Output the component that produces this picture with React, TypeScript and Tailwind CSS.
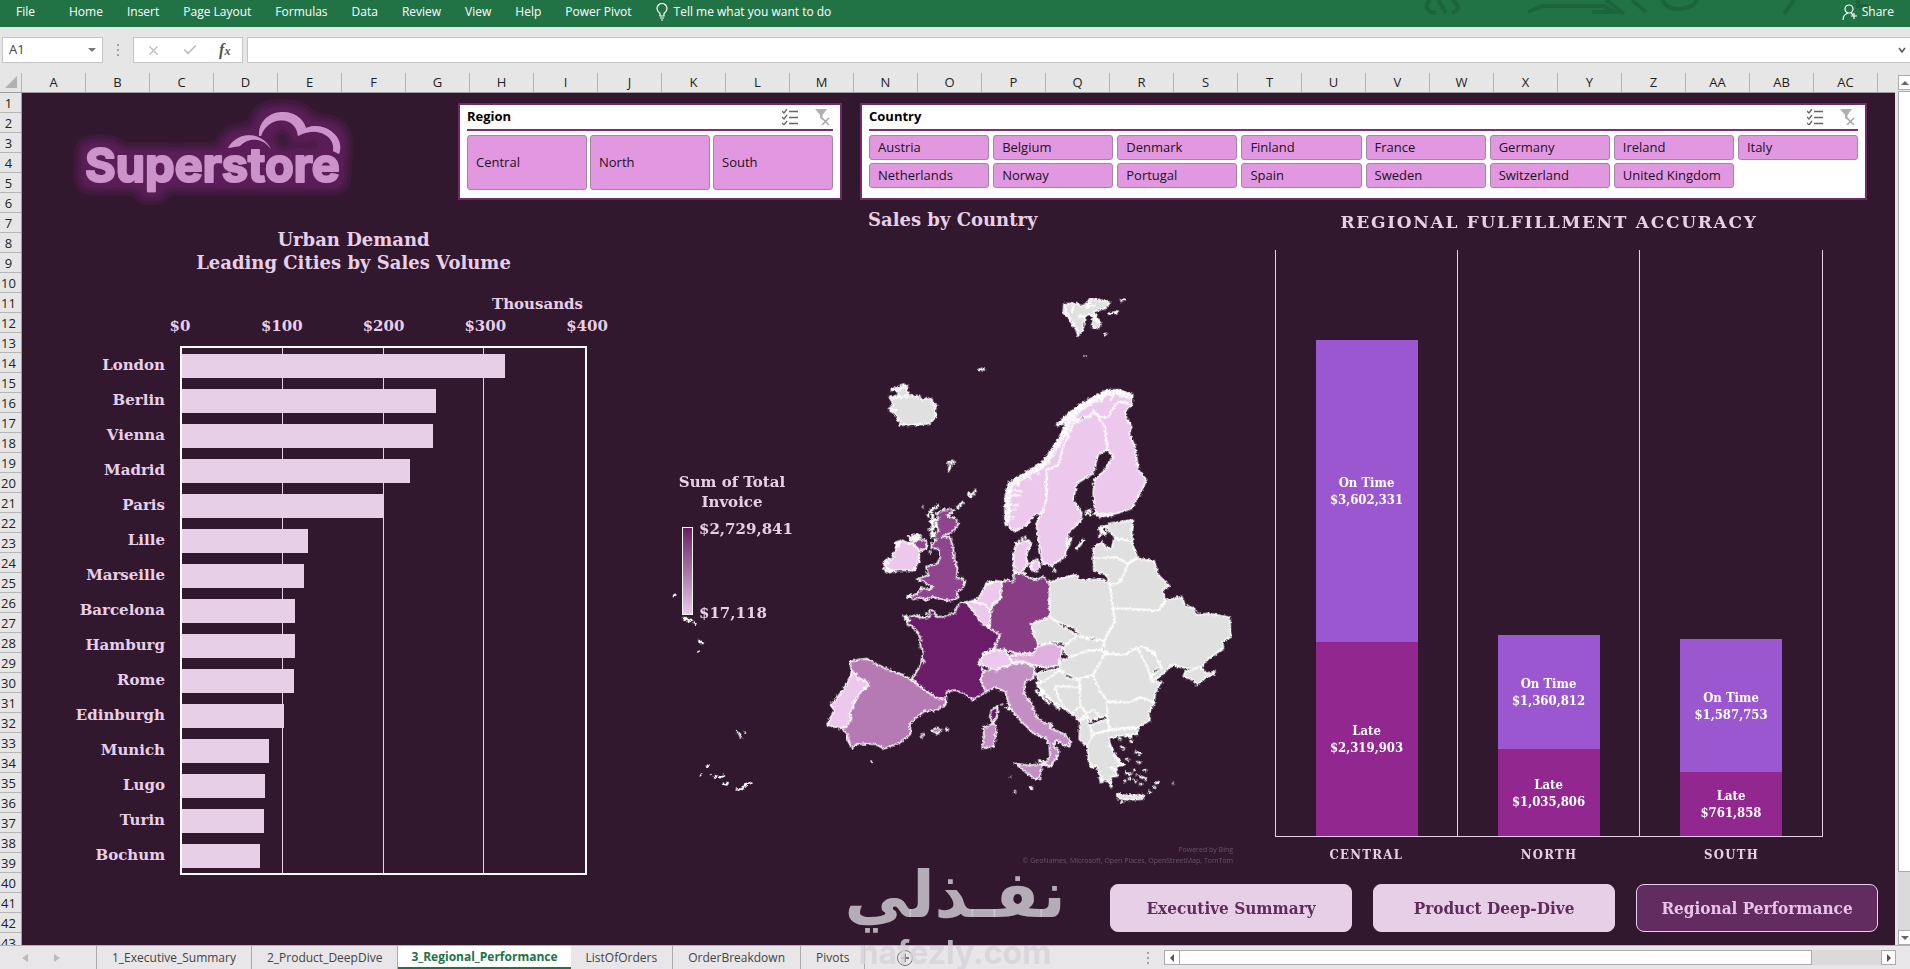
import React from "react";
import { Check, X } from "lucide-react";

const MENU = ["Home", "Insert", "Page Layout", "Formulas", "Data", "Review", "View", "Help", "Power Pivot"];

const COLUMNS = [..."ABCDEFGHIJKLMNOPQRSTUVWXYZ", "AA", "AB", "AC"];

const REGIONS = ["Central", "North", "South"];

const COUNTRIES = [
  "Austria", "Belgium", "Denmark", "Finland", "France", "Germany", "Ireland", "Italy",
  "Netherlands", "Norway", "Portugal", "Spain", "Sweden", "Switzerland", "United Kingdom",
];

// sales in thousands
const CITIES = [
  { name: "London", value: 321 },
  { name: "Berlin", value: 252 },
  { name: "Vienna", value: 249 },
  { name: "Madrid", value: 226 },
  { name: "Paris", value: 200 },
  { name: "Lille", value: 125 },
  { name: "Marseille", value: 121 },
  { name: "Barcelona", value: 112 },
  { name: "Hamburg", value: 112 },
  { name: "Rome", value: 111 },
  { name: "Edinburgh", value: 101 },
  { name: "Munich", value: 86 },
  { name: "Lugo", value: 82 },
  { name: "Turin", value: 81 },
  { name: "Bochum", value: 77 },
];
const CITY_MAX = 400;

const FULFILLMENT = [
  { region: "Central", onTime: 3602331, late: 2319903 },
  { region: "North", onTime: 1360812, late: 1035806 },
  { region: "South", onTime: 1587753, late: 761858 },
];
const FULFILLMENT_MAX = 7000000;

const SHEETS = ["1_Executive_Summary", "2_Product_DeepDive", "3_Regional_Performance", "ListOfOrders", "OrderBreakdown", "Pivots"];

const SERIF = "font-['DejaVu_Serif',serif] font-bold";
const SERIF_NARROW = "font-['DejaVu_Serif_Condensed','DejaVu_Serif',serif] font-bold";

const money = (n: number) => "$" + n.toLocaleString("en-US");

function Ribbon() {
  return (
    <header className="relative flex h-[27px] shrink-0 items-start overflow-hidden bg-[#217346] text-xs leading-6 text-white">
      <svg className="absolute top-0 right-0 h-[27px] w-[500px]" viewBox="0 0 500 27" fill="none" stroke="#1c653c" strokeWidth="4">
        <path d="M20 0c-6 6-4 12 6 13M28 0l8 13M42 0c8 5 8 10 0 13M118 12l14-6h62l10 6h-22M196 0l18 14M222 0l14 12M252 0c6 12 26 12 36 0M384 0l-10 14M448 0v6h10" />
      </svg>
      <nav className="relative flex gap-6 pl-4">
        <button type="button" className="mr-2.5">File</button>
        {MENU.map((item) => (
          <button key={item} type="button">{item}</button>
        ))}
        <button type="button" className="flex items-center gap-1.5">
          <svg className="h-[18px] w-3" viewBox="0 0 12 18" fill="none" stroke="white" strokeWidth="1.2">
            <path d="M4 13v-2.500C2 9 1 7.500 1 5.500a5 5 0 0 1 10 0c0 2-1 3.500-3 5V13zM4 15h4M5 17h2" />
          </svg>
          Tell me what you want to do
        </button>
      </nav>
      <button type="button" className="relative ml-auto flex items-center gap-1 pr-4">
        <svg className="h-4 w-4" viewBox="0 0 16 16" fill="none" stroke="white" strokeWidth="1.200">
          <circle cx="7" cy="5" r="4" />
          <path d="M1 16c0-4 2-6 5-7M9 9l2 2M12 9v6M9 12h6" />
        </svg>
        Share
      </button>
    </header>
  );
}

function FormulaBar() {
  return (
    <div className="flex h-[46px] shrink-0 items-start gap-1 bg-[#e6e6e6] pt-[10px]">
      <div className="ml-0.5 flex h-[26px] w-[101px] items-center border border-[#c6c6c6] bg-white pr-1.5">
        <input aria-label="Name box" defaultValue="A1" className="w-full bg-transparent pl-1.5 text-[13px] text-[#444] outline-none" />
        <svg className="h-1 w-2 shrink-0" viewBox="0 0 8 4" fill="#777"><path d="M0 0h8l-4 4z" /></svg>
      </div>
      <div className="flex h-[26px] w-[22px] items-center justify-center">
        <svg className="h-3 w-0.5" viewBox="0 0 2 12" fill="#a0a0a0"><path d="M0 0h2v2H0zM0 5h2v2H0zM0 10h2v2H0z" /></svg>
      </div>
      <div className="flex h-[26px] w-[110px] items-center justify-around border border-[#c6c6c6] bg-white px-px">
        <button type="button" aria-label="Cancel"><X size={15} color="#bdbdbd" strokeWidth={2} /></button>
        <button type="button" aria-label="Enter"><Check size={16} color="#bdbdbd" strokeWidth={2.5} /></button>
        <button type="button" className="font-['Liberation_Serif',serif] text-base leading-4 font-bold italic text-[#555]">
          f<span className="text-xs">x</span>
        </button>
      </div>
      <div className="flex h-[26px] flex-1 items-center border border-r-0 border-[#c6c6c6] bg-white pr-1">
        <input aria-label="Formula" className="w-full bg-transparent px-2 text-[13px] outline-none" />
        <svg className="h-1.5 w-2 shrink-0" viewBox="0 0 8 6" fill="none" stroke="#555" strokeWidth="1.500"><path d="M1 1l3 4 3-4" /></svg>
      </div>
    </div>
  );
}

function Logo() {
  return (
    <svg className="h-[130px] w-[320px]" viewBox="0 0 320 130" role="img" aria-label="Superstore">
      <defs>
        <filter id="glow" x="-20%" y="-30%" width="140%" height="160%">
          <feMorphology in="SourceAlpha" operator="dilate" radius="8" result="fat" />
          <feGaussianBlur in="fat" stdDeviation="5" result="soft" />
          <feFlood floodColor="#5c1e5a" />
          <feComposite in2="soft" operator="in" result="halo" />
          <feMerge>
            <feMergeNode in="halo" />
            <feMergeNode in="SourceGraphic" />
          </feMerge>
        </filter>
      </defs>
      <g filter="url(#glow)" fill="#cc92ca" stroke="#cc92ca" strokeLinejoin="round">
        <text x="25" y="87" fontSize="47" strokeWidth="2" className="font-['Inter',sans-serif] font-bold">Superstore</text>
        <g stroke="none">
          <path d="M168 53C178 36 201 36 211 54C202 42 188 42 180 51z" />
          <path d="M199 41C198 12 239 9 246 33C264 25 286 42 279 59L273 56C276 42 258 30 238 41C236 20 208 20 201 41z" />
        </g>
      </g>
    </svg>
  );
}

function MultiSelectIcon() {
  return (
    <svg className="h-4 w-4" viewBox="0 0 16 16" fill="none" stroke="#666" strokeWidth="1.300">
      <path d="M0 2l2 2 3-4M0 8l2 2 3-4M0 14l2 2 3-4M7 2.500h9M7 8.500h9M7 14.500h9" />
    </svg>
  );
}

function ClearFilterIcon() {
  return (
    <svg className="h-4 w-4" viewBox="0 0 16 16" fill="none" stroke="#a6a6a6" strokeWidth="1.500">
      <path d="M1 0h12L8.500 6v5L6 9V6z" fill="#b0b0b0" stroke="none" />
      <path d="M8 9l7 7M15 9l-7 7" />
    </svg>
  );
}

type SlicerProps = { title: string; items: string[]; gridClass: string; itemClass: string };

function Slicer({ title, items, gridClass, itemClass }: SlicerProps) {
  return (
    <section className="h-[97px] min-w-0 border-2 border-[#6f2a6c] bg-white px-[7px]">
      <div className="flex h-[26px] items-center gap-4 border-b-2 border-[#7c2f78] pr-[3px]">
        <h2 className="flex-1 text-[13px] font-bold text-black">{title}</h2>
        <button type="button" aria-label="Multi-select"><MultiSelectIcon /></button>
        <button type="button" aria-label="Clear filter"><ClearFilterIcon /></button>
      </div>
      <div className={`mt-1 grid ${gridClass}`}>
        {items.map((item) => (
          <button
            key={item}
            type="button"
            className={`rounded-[3px] border border-[#a187a1] bg-[#e298e1] pl-2 text-left text-[13px] whitespace-nowrap text-[#1c101c] ${itemClass}`}
          >
            {item}
          </button>
        ))}
      </div>
    </section>
  );
}

function CityChart() {
  return (
    <section className="pt-7 pr-[53px] text-[#e8cfe8]">
      <h2 className={`pl-[98px] text-center text-[18px] leading-[23px] ${SERIF}`}>
        Urban Demand
        <br />
        Leading Cities by Sales Volume
      </h2>
      <p className={`mt-[19px] pr-1 text-right text-[15px] leading-[22px] ${SERIF}`}>Thousands</p>
      <div className={`ml-[158px] flex justify-between text-[15px] leading-[22px] ${SERIF}`}>
        {[0, 100, 200, 300, 400].map((tick) => (
          <span key={tick} className="flex w-0 justify-center">${tick}</span>
        ))}
      </div>
      <div className="mt-[9px] flex">
        <ul className={`w-[158px] pt-0.5 pr-[15px] text-right text-[15px] leading-[35px] ${SERIF}`}>
          {CITIES.map((city) => (
            <li key={city.name}>{city.name}</li>
          ))}
        </ul>
        <div className="grid flex-1 border-2 border-white">
          <div className="col-start-1 row-start-1 grid grid-cols-4 divide-x divide-[#e8cfe8]">
            <i /><i /><i /><i />
          </div>
          <div className="col-start-1 row-start-1">
            {CITIES.map((city) => (
              <div key={city.name} className="flex h-[35px] items-center">
                <div className="h-6 bg-[#e8cfe8]" style={{ width: `${(city.value / CITY_MAX) * 100}%` }} />
              </div>
            ))}
          </div>
        </div>
      </div>
    </section>
  );
}

const GREY = "#e0e0e0";
const PALE = "#ecc9ec";

// Each group has its own origin, see the translate on its <g>.
const NORTH = [
  { fill: GREY, d: "M88 350L102 356 112 350 122 356 134 345 140 354 152 344 166 352 178 346 184 362 200 354 216 358 218 372 230 376 224 388 228 410 214 426 200 432 160 434 122 435 108 405 85 388 100 375z" },
  { fill: GREY, d: "M95 325L112 322 130 312 142 318 140 332 146 345 120 350 112 336z" },
  { fill: GREY, d: "M612 72L650 70 664 78 680 72 690 55 720 60 750 68 735 85 700 95 722 130 715 145 695 138 700 120 690 100 675 110 670 145 655 168 645 140 632 125 628 112 610 100z" },
  { fill: PALE, d: "M435 655L445 610 500 575 545 550 575 510 600 470 622 430 590 435 625 400 665 370 705 350 740 330 780 330 818 345 815 374 795 366 775 365 758 385 745 412 722 412 700 392 690 410 668 410 640 430 625 470 610 500 595 555 560 570 558 610 560 660 545 700 522 705 500 735 465 755 435 730z" },
  { fill: PALE, d: "M700 392L735 440 740 490 742 510 715 522 700 580 650 610 640 660 665 700 662 722 625 760 615 830 575 858 548 850 538 800 528 730 545 700 560 655 560 570 595 555 610 500 640 430 690 410z" },
  { fill: PALE, d: "M700 392L722 412 745 412 758 385 775 365 815 374 796 395 800 415 815 440 808 460 825 500 835 570 860 600 840 640 815 685 770 700 720 712 705 690 700 640 702 600 730 575 760 530 742 510 740 480 735 440z" },
];

const WEST = [
  { fill: "#8f458d", d: "M372 28L405 28 382 48 402 54 417 70 395 98 365 110 390 112 400 145 402 175 412 205 410 235 426 234 435 248 428 266 408 276 416 292 396 302 372 300 335 290 318 300 300 292 282 298 262 290 290 282 302 264 328 268 340 260 320 252 312 244 290 238 325 225 318 200 350 192 360 175 358 155 352 146 334 145 335 132 350 120 342 108 355 90 345 66 355 55 350 40z" },
  { fill: "#8f458d", d: "M275 130L295 118 318 120 320 145 302 152z" },
  { fill: PALE, d: "M225 128L245 120 262 128 278 130 298 152 296 185 282 212 240 210 205 218 192 208 202 202 192 195 195 180 222 175 216 165 228 150z" },
  { fill: "#6b1b69", d: "M252 348L272 350 290 345 305 354 330 350 328 330 340 332 350 350 372 350 405 338 412 318 422 308 438 306 452 325 470 340 480 362 505 378 540 405 522 445 490 460 475 490 490 512 482 540 497 575 460 600 430 580 405 570 380 575 378 600 345 592 300 560 275 535 290 515 302 490 310 455 302 440 300 410 285 385 262 372z" },
  { fill: "#b57ab4", d: "M90 485L120 478 140 476 170 492 210 512 250 525 275 540 300 560 345 592 378 600 376 615 350 630 312 634 286 655 270 672 272 702 240 728 192 746 165 732 110 732 98 745 85 725 80 700 65 685 90 630 125 570 145 555 95 515z" },
  { fill: PALE, d: "M95 515L110 522 112 538 135 540 147 555 122 575 110 595 98 605 102 620 88 640 95 655 80 680 60 685 22 675 35 645 42 632 32 614 50 595 75 560 90 530z" },
  { fill: "#883c84", d: "M545 245L566 240 580 246 582 222 605 218 625 232 650 240 670 228 688 250 690 285 685 300 692 350 632 372 640 400 655 430 640 460 590 460 555 450 520 450 540 405 510 385 508 345 518 318 540 300z" },
  { fill: PALE, d: "M500 248L528 242 546 246 540 300 518 310 512 335 498 315 455 306 478 292z" },
  { fill: PALE, d: "M438 306L455 304 498 315 512 345 508 385 480 365 465 340z" },
  { fill: PALE, d: "M582 218L580 160 590 132 625 120 632 135 618 165 622 190 605 218z" },
  { fill: PALE, d: "M632 190L650 178 662 195 650 215 636 212z" },
  { fill: "#c38ec3", d: "M490 512L520 508 545 500 580 490 620 488 645 505 640 535 615 545 612 580 635 610 650 650 670 668 695 670 692 685 728 700 750 720 750 740 730 735 710 720 700 735 716 752 712 770 692 798 672 796 690 770 688 735 678 715 640 700 605 665 570 625 555 575 525 562 497 575 482 545z" },
  { fill: PALE, d: "M475 490L490 465 520 450 555 450 570 478 582 490 562 498 545 500 530 512 498 500z" },
  { fill: "#dfb0de", d: "M568 466L600 462 640 462 650 440 690 430 728 440 722 470 715 495 680 503 640 495 610 484 575 485z" },
  { fill: "#6b1b69", d: "M533 618L531 648 520 668 509 650 514 630z" },
  { fill: "#c38ec3", d: "M490 682L522 670 530 690 520 740 486 745 492 710z" },
  { fill: "#c38ec3", d: "M585 790L625 796 670 792 660 815 662 838 640 834 615 815z" },
  { fill: "#b57ab4", d: "M336 690L352 682 364 690 352 702z" },
];

const EAST = [
  "M148 248L190 232 230 225 240 240 310 238 330 255 336 310 344 365 325 395 312 425 280 412 250 415 222 385 150 355z",
  "M92 372L150 352 180 375 232 405 205 432 160 425 132 434 110 428z",
  "M190 440L232 408 270 418 312 422 308 450 260 452 215 470 195 462z",
  "M178 485L215 470 262 452 308 450 315 462 280 525 230 536 180 512z",
  "M325 70L400 60 394 90 398 125 345 112 330 95 318 86z",
  "M280 178L280 145 305 125 320 145 336 142 342 115 395 125 412 172 382 190 350 172z",
  "M280 175L350 172 384 192 372 225 350 255 328 250 320 225 282 212z",
  "M384 192L412 175 440 180 462 182 475 225 508 258 488 268 495 300 475 332 430 328 340 325 330 255 360 248z",
  "M340 325L475 332 500 300 545 290 555 315 582 325 590 345 625 340 690 352 690 395 695 410 668 425 670 445 620 480 605 505 560 505 515 495 480 530 455 545 450 530 485 505 460 455 428 440 400 448 370 465 315 458 312 425 344 365z",
  "M550 530L555 515 575 510 600 500 620 520 645 514 640 526 620 530 590 556 580 540z",
  "M412 445L428 440 460 460 485 500 462 510 452 540 440 500z",
  "M315 462L370 465 412 445 442 500 455 545 485 545 466 578 462 605 420 592 385 608 320 602 298 570 280 525z",
  "M320 605L385 608 420 592 464 608 445 640 450 660 415 680 370 684 330 690 320 650z",
  "M105 520L178 505 165 535 120 545z",
  "M108 545L125 548 178 512 205 535 238 540 238 562 165 558 178 600 218 642 160 605 125 580z",
  "M165 558L238 562 242 620 216 645 178 600z",
  "M240 535L280 525 298 570 320 602 322 648 290 655 262 640 240 615z",
  "M216 640L240 618 260 640 240 665z",
  "M240 660L260 648 272 690 276 712 262 742 238 718z",
  "M258 642L280 628 300 648 272 664z",
  "M270 675L320 658 328 690 280 702z",
  "M262 742L278 705 330 690 415 684 412 702 372 705 325 715 335 745 345 765 372 795 352 798 346 812 352 828 332 830 336 862 318 840 302 848 292 800 268 798z",
  "M350 880L375 886 430 885 428 897 385 900 352 895z",
];

function EuropeMap() {
  return (
    <svg className="w-full" viewBox="0 0 1830 1620" role="img" aria-label="Sales by country, map of Europe">
      <defs>
        <filter id="coast" x="0" y="0" width="100%" height="100%">
          <feTurbulence type="fractalNoise" baseFrequency="0.12" numOctaves="2" seed="4" />
          <feDisplacementMap in="SourceGraphic" scale="12" xChannelSelector="R" yChannelSelector="G" />
        </filter>
      </defs>
      <g stroke="#fff" strokeWidth="5" strokeLinejoin="round" filter="url(#coast)">
        <g transform="translate(660 0)">
          {NORTH.map((s) => <path key={s.d} d={s.d} fill={s.fill} />)}
          {/* fjords, skerries and small islands */}
          <path fill="none" strokeWidth="18" strokeDasharray="9 2" d="M442 725L442 655 450 615 500 582 548 556 578 514 604 474 628 424 665 380 705 358 740 338 780 338 812 350" />
          <path fill="none" strokeWidth="5" d="M445 692l22-4M446 672l20 4 10-4M450 652l14-8 18 2M452 632l20-2 12 6M470 618l8-10M452 710l12 4M500 590l14 10M530 570l8 12M560 540l10 10M592 436L640 402M640 418h20M680 380l10-18M720 368L735 345M750 362l12-18M780 352l14-10M610 470l14-12" />
          <path fill="none" strokeWidth="10" strokeDasharray="7 3" d="M590 436L626 408 664 378 700 356 740 336" />
          <path fill="none" strokeWidth="6" d="M612 78l8 20 12 24 22 34M640 74l-4 26M650 110h24M690 62l-10 20 26-8M700 104l12 24M92 330h24l20-12M96 352l20-6M92 388l20 4" />
          <path fill="none" strokeWidth="8" d="M648 808L660 794 672 778M620 808L634 772M675 698L695 706M680 690l14 4M700 700L760 706M716 745L738 762M716 772L728 756M720 740h20M355 270L374 266M676 226v4M734 165L740 158M745 102L776 94M780 62L796 58M262 548L284 546M272 554L264 576M330 652L350 628M322 640l10 4M290 684L310 666M188 678l2 4M202 712L212 692 236 676M206 728L230 716M206 750L232 738M212 772L228 760M218 700v74M150 776L185 770M515 790L505 800M580 868l8 6" />
          <path fill="none" strokeWidth="9" strokeDasharray="8 3" d="M500 770L470 790 462 830 462 860M500 850l14 10M515 870L540 850M470 870l30 14" />
          <path fill={GREY} d="M605 898L640 885 655 895z" strokeWidth="3" />
        </g>
        <g transform="translate(540 660)">
          {WEST.map((s) => <path key={s.d} d={s.d} fill={s.fill} />)}
          <path fill="none" strokeWidth="8" d="M262 112L300 104M268 122l30-6M196 200L215 212M196 186l12 4M240 124l-10 16M328 160L334 154M318 342L322 338M256 350l14 14M290 400L296 396M302 705L312 702M304 710l2 4M376 686L386 690M154 786l2-4M310 480l4 8M556 622L572 628M545 612l3 3M570 828l2 2M582 872l5 3M630 860L638 867M655 780L675 788M330 100L345 104M345 76L352 70M500 254l20-8M455 304l12-2" />
        </g>
        <g transform="translate(1080 660)" fill={GREY}>
          {EAST.map((d) => <path key={d} d={d} />)}
          <path fill="none" strokeWidth="8" d="M112 556L180 630M106 570L150 612M355 715l10 4M375 708l22 2M360 740l14 6M405 755L425 762M390 722l6 4M380 775l6 6M412 785l10 5M365 790l8 8M375 815L392 826M398 806l6 6M385 835l6 4M402 840l8 6M418 828L440 838M430 808l8 4M418 850l8 4M372 842l6 2M390 822l6-4M408 822l4 2M465 850L478 846M458 860l10 4M446 880l4-8M516 850l4 2M362 905l6 5M340 765L362 790M270 790l8 14M300 95L320 102M296 85h14M325 740l16 8M330 800l20 10M300 830l8 10" />
        </g>
        <g transform="translate(0 540)" fill="none" strokeWidth="7">
          <path d="M96 410L108 403M128 470L138 482M136 472L148 486M150 476l4 8M162 488l6 6M176 540L190 552M174 572l3 4M288 812L300 824 303 836M312 818h6M200 922L206 914M180 942l6 2M210 944l4 2M222 948L240 952 254 946M248 970l12 4 4-8M288 988L306 988 318 972 334 970M694 908l2-4" />
        </g>
      </g>
    </svg>
  );
}

function CountryMap() {
  return (
    <section className="text-[#e8cfe8]">
      <h2 className={`pt-2 pl-[228px] text-[18px] leading-6 ${SERIF}`}>Sales by Country</h2>
      <div className="mt-12 grid">
        <div className="col-start-1 row-start-1">
          <EuropeMap />
        </div>
        <div className={`col-start-1 row-start-1 mt-48 ml-8 w-[120px] text-[15px] leading-5 ${SERIF}`}>
          <p className="text-center">Sum of Total Invoice</p>
          <div className="mt-[15px] flex gap-1.5 pl-2.5">
            <div className="h-[88px] w-[11px] shrink-0 border border-white bg-linear-to-b from-[#6b1b69] to-[#ecc9ec]" />
            <div className="-my-2 flex flex-col justify-between">
              <span>$2,729,841</span>
              <span>$17,118</span>
            </div>
          </div>
        </div>
      </div>
      <p className="mt-6 pr-[17px] text-right text-[7px] leading-[11px] text-[#675565]">
        Powered by Bing
        <br />
        © GeoNames, Microsoft, Open Places, OpenStreetMap, TomTom
      </p>
    </section>
  );
}

function Segment({ label, value, className }: { label: string; value: number; className: string }) {
  return (
    <div
      className={`flex flex-col items-center justify-center text-[13px] leading-[17px] text-white ${className}`}
      style={{ height: `${(value / FULFILLMENT_MAX) * 100}%` }}
    >
      <span>{label}</span>
      <span>{money(value)}</span>
    </div>
  );
}

function FulfillmentChart() {
  return (
    <section className="pt-[10px] pr-[72px] pl-[25px] text-[#e8cfe8]">
      <h2 className={`text-center text-[17px] leading-6 tracking-widest uppercase ${SERIF}`}>Regional Fulfillment Accuracy</h2>
      <div className={`mt-4 grid h-[587px] grid-cols-3 divide-x divide-[#e8cfe8] border-x border-b border-[#e8cfe8] ${SERIF_NARROW}`}>
        {FULFILLMENT.map((row) => (
          <div key={row.region} className="flex flex-col items-center justify-end">
            <div className="flex h-full w-[102px] flex-col justify-end">
              <Segment label="On Time" value={row.onTime} className="bg-[#9a57d0]" />
              <Segment label="Late" value={row.late} className="bg-[#92278f]" />
            </div>
          </div>
        ))}
      </div>
      <div className={`mt-1.5 grid grid-cols-3 text-center text-[13px] leading-6 tracking-widest uppercase ${SERIF_NARROW}`}>
        {FULFILLMENT.map((row) => (
          <span key={row.region}>{row.region}</span>
        ))}
      </div>
    </section>
  );
}

function Dashboard() {
  return (
    <main className="min-w-0 flex-1 bg-[#31182e]">
      <div className="flex h-[107px] pt-[10px] pr-7">
        <div className="-mt-2 w-[436px] shrink-0 pl-[38px]">
          <Logo />
        </div>
        <div className="grid min-w-0 flex-1 grid-cols-[384fr_1007fr] gap-[18px]">
          <Slicer title="Region" items={REGIONS} gridClass="grid-cols-3 gap-[3px]" itemClass="h-[55px]" />
          <Slicer title="Country" items={COUNTRIES} gridClass="grid-cols-8 gap-x-1 gap-y-[3px]" itemClass="h-[25px]" />
        </div>
      </div>
      <div className="grid h-[684px] grid-cols-[618fr_610fr_645fr]">
        <CityChart />
        <CountryMap />
        <FulfillmentChart />
      </div>
      <nav className={`flex justify-end gap-[21px] pr-[17px] text-center text-[17px] leading-[46px] ${SERIF_NARROW}`}>
        <a href="#executive" className="w-[242px] rounded-lg border border-[#e8cfe8] bg-[#e8cfe8] text-[#5f2c5d]">Executive Summary</a>
        <a href="#product" className="w-[242px] rounded-lg border border-[#e8cfe8] bg-[#e8cfe8] text-[#5f2c5d]">Product Deep-Dive</a>
        <a href="#regional" className="w-[242px] rounded-lg border border-[#e8cfe8] bg-[#622c60] text-[#e9c3ea]">Regional Performance</a>
      </nav>
    </main>
  );
}

function Sheet() {
  return (
    <div className="flex min-w-0 flex-1 flex-col">
      <div className="flex h-5 shrink-0 overflow-hidden border-b border-[#9f9f9f] text-[13px] leading-[18px] text-[#222]">
        <div className="flex w-[22px] shrink-0 items-end justify-end border-r border-[#b5b5b5] pr-1 pb-1">
          <svg className="h-3 w-3" viewBox="0 0 12 12" fill="#b1b1b1"><path d="M12 0v12H0z" /></svg>
        </div>
        {COLUMNS.map((col) => (
          <div key={col} className="w-16 shrink-0 border-r border-[#b5b5b5] text-center">{col}</div>
        ))}
      </div>
      <div className="flex min-h-0 flex-1 overflow-hidden">
        <div className="w-[22px] shrink-0 border-r border-[#9f9f9f] text-[13px] leading-5 text-[#222]">
          {Array.from({ length: 43 }, (_, i) => (
            <div key={i} className="h-5 border-b border-[#b5b5b5] pr-1 text-center">{i + 1}</div>
          ))}
        </div>
        <Dashboard />
      </div>
    </div>
  );
}

function VerticalScroll() {
  return (
    <div className="flex w-[15px] shrink-0 flex-col pt-0.5 pl-[3px]">
      <button type="button" aria-label="Scroll up" className="flex h-[15px] items-center justify-center border border-r-0 border-[#ababab] bg-white">
        <svg className="h-1 w-2" viewBox="0 0 8 4" fill="#666"><path d="M0 4h8L4 0z" /></svg>
      </button>
      <div className="mt-px flex-[782] border border-r-0 border-[#ababab] bg-white" />
      <div className="flex-[58] bg-[#dadada]" />
      <button type="button" aria-label="Scroll down" className="flex h-[15px] items-center justify-center border border-r-0 border-[#ababab] bg-white">
        <svg className="h-1 w-2" viewBox="0 0 8 4" fill="#666"><path d="M0 0h8L4 4z" /></svg>
      </button>
    </div>
  );
}

function TabBar() {
  return (
    <footer className="relative flex h-6 shrink-0 border-t border-[#b9adb9] bg-[#e8e6e8] text-xs leading-[22px] text-[#444]">
      <div className="flex w-[97px] items-center gap-[26px] border-r border-[#ababab] pl-[22px]">
        <svg className="h-2 w-1.5" viewBox="0 0 6 8" fill="#bbb"><path d="M6 0v8L0 4z" /></svg>
        <svg className="h-2 w-1.5" viewBox="0 0 6 8" fill="#bbb"><path d="M0 0v8l6-4z" /></svg>
      </div>
      {SHEETS.map((sheet) =>
        sheet === "3_Regional_Performance" ? (
          <button key={sheet} type="button" className="border-b-2 border-[#217346] bg-white px-[13px] font-bold text-[#217346]">{sheet}</button>
        ) : (
          <button key={sheet} type="button" className="border-r border-[#ababab] px-[15px]">{sheet}</button>
        )
      )}
      <button type="button" aria-label="New sheet" className="ml-8">
        <svg className="h-4 w-4" viewBox="0 0 16 16" fill="none" stroke="#777">
          <circle cx="8" cy="8" r="7.500" />
          <path d="M8 4v8M4 8h8" strokeWidth="2" />
        </svg>
      </button>
      <div className="ml-auto flex w-[763px] items-center pr-3.5">
        <svg className="mr-[15px] h-3 w-0.5" viewBox="0 0 2 12" fill="#a0a0a0"><path d="M0 0h2v2H0zM0 5h2v2H0zM0 10h2v2H0z" /></svg>
        <button type="button" aria-label="Scroll left" className="flex h-[15px] w-4 items-center justify-center border border-[#ababab] bg-white">
          <svg className="h-2 w-1" viewBox="0 0 4 8" fill="#555"><path d="M4 0v8L0 4z" /></svg>
        </button>
        <div className="h-[15px] flex-[633] border border-l-0 border-[#ababab] bg-white" />
        <div className="h-[15px] flex-[69] bg-[#dadada]" />
        <button type="button" aria-label="Scroll right" className="flex h-[15px] w-[15px] items-center justify-center border border-[#ababab] bg-white">
          <svg className="h-2 w-1" viewBox="0 0 4 8" fill="#555"><path d="M0 0v8l4-4z" /></svg>
        </button>
      </div>
      {/* Watermark across the sheet and the tab bar */}
      <div className="pointer-events-none absolute bottom-0 left-1/2 -translate-x-1/2 text-center font-bold text-[#d6d2d9]/80">
        <p dir="rtl" lang="ar" className="font-['DejaVu_Sans',sans-serif] text-[65px] leading-[84px] whitespace-nowrap">نفـذلي</p>
        <p className="font-['Inter',sans-serif] text-[32px] leading-8">nafezly.com</p>
      </div>
    </footer>
  );
}

export default function App() {
  return (
    <div className="flex h-screen flex-col overflow-hidden bg-[#e6e6e6] font-['Open_Sans','Noto_Sans',sans-serif]">
      <Ribbon />
      <FormulaBar />
      <div className="flex min-h-0 flex-1">
        <Sheet />
        <VerticalScroll />
      </div>
      <TabBar />
    </div>
  );
}
